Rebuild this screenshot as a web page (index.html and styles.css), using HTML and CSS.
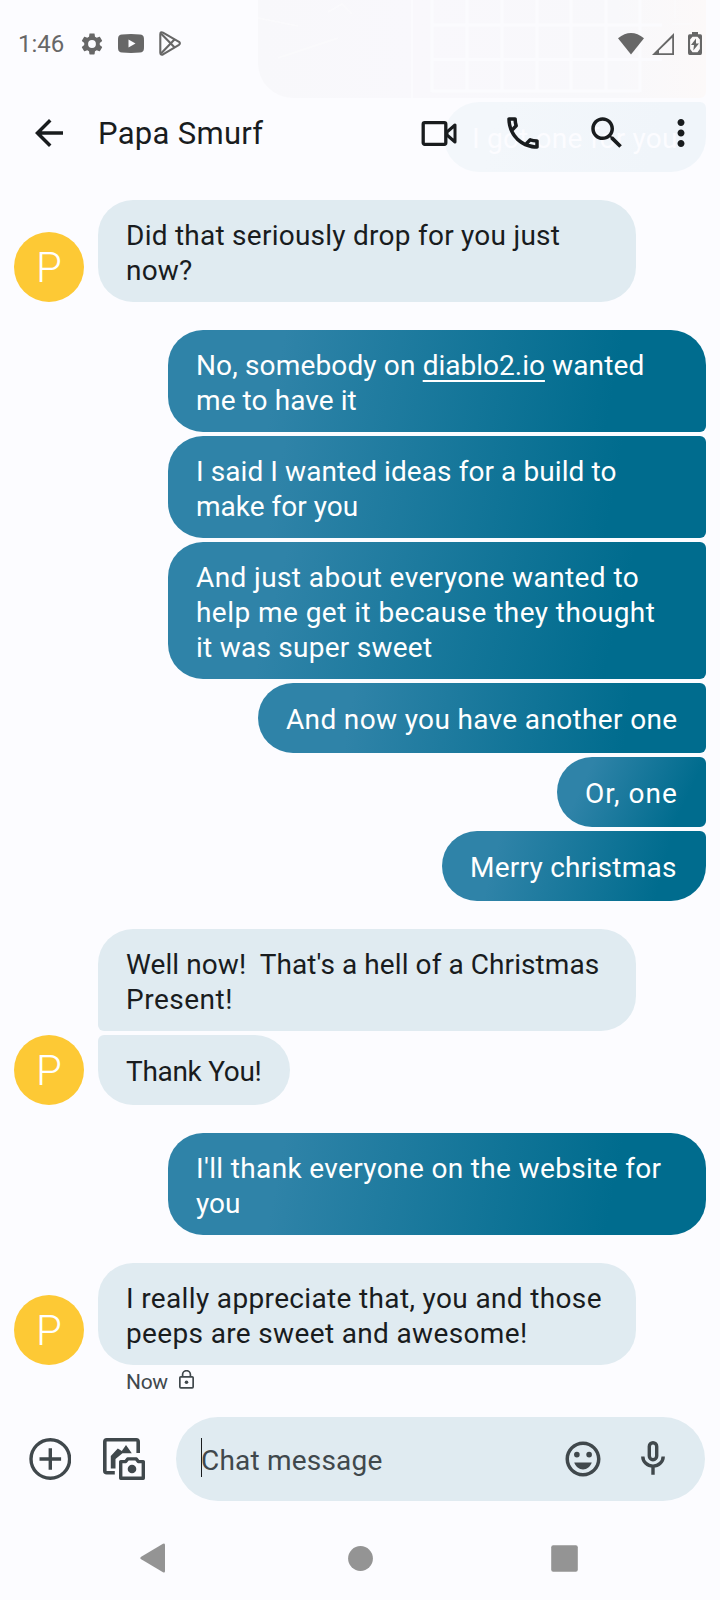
FILE: index.html
```html
<!DOCTYPE html>
<html lang="en">
<head>
<meta charset="utf-8">
<title>Papa Smurf</title>
<link rel="stylesheet" href="styles.css">
</head>
<body>
<div class="screen">
  <div class="scrolled">
    <svg class="scrolled-photo" width="448" height="98" viewBox="0 0 448 98">
      <defs>
        <linearGradient id="photo" x1="0" y1="0" x2="1" y2="0">
          <stop offset="0" stop-color="#f8f8fb"/>
          <stop offset=".35" stop-color="#f9f8fc"/>
          <stop offset=".8" stop-color="#f8f8fb"/>
          <stop offset="1" stop-color="#fcf9f9"/>
        </linearGradient>
      </defs>
      <path fill="url(#photo)" d="M0 0h448v92a6 6 0 0 1-6 6H35A35 35 0 0 1 0 63z"/>
      <g fill="none" stroke="#fbfbfe" stroke-width="3">
        <path d="M154 0v98" stroke-width="2"/>
        <path d="M174 0v92M209 0v92M244 0v92M279 0v92M313 0v92M348 0v92M382 0v92M174 25h230M174 59.500h230M174 91h208"/>
        <path d="M417 0v18M414 24h20M0 18l40 8M20 58l60-20M70 12l14-8 10 10" stroke-width="1.500" opacity=".6"/>
      </g>
    </svg>
    <div class="scrolled-bubble">I got one for you</div>
  </div>

  <header class="status">
    <span class="time">1:46</span>
    <svg class="gear" width="26" height="26" viewBox="0 0 24 24"><path fill="#676767" d="M19.140 12.940c.04-.3.060-.610.060-.940 0-.320-.020-.640-.070-.940l2.030-1.580c.18-.14.23-.410.120-.610l-1.920-3.320c-.12-.22-.370-.290-.590-.220l-2.390.960c-.5-.380-1.030-.7-1.620-.940L14.400 2.810c-.04-.240-.240-.410-.480-.410h-3.840c-.240 0-.430.170-.470.410L9.250 5.350c-.590.240-1.130.570-1.620.940L5.240 5.330c-.22-.080-.470 0-.590.220L2.740 8.870c-.120.210-.080.470.120.610l2.030 1.580c-.050.300-.090.630-.090.940s.020.640.070.940l-2.030 1.580c-.180.140-.230.410-.120.610l1.920 3.320c.12.22.370.290.590.220l2.390-.960c.5.380 1.030.7 1.620.940l.360 2.540c.050.240.240.410.480.410h3.840c.240 0 .440-.170.470-.410l.360-2.540c.590-.240 1.130-.560 1.620-.940l2.390.960c.220.080.470 0 .590-.220l1.920-3.320c.120-.220.070-.470-.120-.610zM12 15.600A3.600 3.600 0 1 1 12 8.400a3.600 3.600 0 0 1 0 7.200z"/></svg>
    <svg class="tube" width="26" height="19" viewBox="0 0 26 19"><path fill="#676767" fill-rule="evenodd" d="M4 .4Q13-.4 22 .4q3.600.2 3.900 3.600.3 5.500 0 11-.3 3.400-3.900 3.600-9 .8-18 0Q.4 18.400.1 15-.2 9.500.1 4 .4.600 4 .4zM10.500 5.500v8l7-4z"/></svg>
    <svg class="play" width="23" height="25" viewBox="0 0 23 25"><g fill="none" stroke="#676767" stroke-width="2.100" stroke-linejoin="round"><path d="M1.300 3.500Q1.300.4 4 1.600l16 9.200q1.800 1.500 0 3L4 23.400Q1.300 24.400 1.300 21.500z"/><path d="M2 2.500 15.700 16.600M2 22.500 15.700 8.200"/></g></svg>
    <svg class="wifi" width="26" height="22" viewBox="0 0 26 22"><path fill="#676767" d="M0 5.200Q13-5.200 26 5.200L13 21.500z"/></svg>
    <svg class="signal" width="22" height="22" viewBox="0 0 22 22"><path fill="#676767" fill-rule="evenodd" d="M22 0v22H0zM20.200 4.800 7 17.500v2.700h13.200z"/></svg>
    <svg class="battery" width="14" height="23" viewBox="0 0 14 23"><path fill="#676767" fill-rule="evenodd" d="M4 0h6v2.200h2.500Q14 2.200 14 4v17q0 2-1.600 2H1.600Q0 23 0 21V4Q0 2.200 1.500 2.200H4zM4.500 4.800 2.100 7.500v9.500l2.400 3.200h5l2.400-3.200V7.500L9.500 4.800z"/><path fill="#676767" d="M8 6.500 3 13h3l-.7 5.500L11 11.600H8z"/></svg>
  </header>

  <header class="bar">
    <svg width="42" height="42" viewBox="0 0 24 24"><path fill="#191c1e" d="M20 11H7.830l5.590-5.590L12 4l-8 8 8 8 1.410-1.410L7.830 13H20v-2z"/></svg>
    <h1 class="name">Papa Smurf</h1>
    <svg class="video" width="42" height="42" viewBox="0 0 42 42"><rect x="5.200" y="10.700" width="22.600" height="21.600" rx="1.500" fill="none" stroke="#191c1e" stroke-width="3.300"/><path fill="none" stroke="#191c1e" stroke-width="3" stroke-linejoin="round" d="M37 13v17l-8-7v-3z"/></svg>
    <svg width="42" height="42" viewBox="0 0 24 24"><path fill="#191c1e" d="M6.540 5c.060.890.210 1.760.450 2.590l-1.200 1.200c-.410-1.200-.670-2.470-.760-3.790h1.510m9.860 12.020c.850.240 1.720.390 2.600.450v1.490c-1.320-.090-2.590-.350-3.800-.750l1.200-1.190M7.500 3H4c-.550 0-1 .450-1 1 0 9.390 7.610 17 17 17 .550 0 1-.450 1-1v-3.490c0-.550-.450-1-1-1-1.240 0-2.450-.2-3.570-.570-.1-.040-.210-.050-.310-.050-.260 0-.510.1-.710.290l-2.200 2.200c-2.830-1.450-5.150-3.760-6.590-6.590l2.200-2.200c.280-.280.360-.670.250-1.020C8.700 6.450 8.500 5.250 8.500 4c0-.550-.450-1-1-1z"/></svg>
    <svg width="42" height="42" viewBox="0 0 24 24"><path fill="#191c1e" d="M15.500 14h-.790l-.280-.270C15.410 12.590 16 11.110 16 9.500 16 5.910 13.090 3 9.500 3S3 5.910 3 9.500 5.910 16 9.500 16c1.610 0 3.090-.590 4.230-1.570l.270.280v.790l5 4.990L20.490 19l-4.990-5zm-6 0C7.010 14 5 11.990 5 9.500S7.010 5 9.500 5 14 7.010 14 9.500 11.990 14 9.500 14z"/></svg>
    <svg class="more" width="42" height="42" viewBox="0 0 24 24"><path fill="#191c1e" d="M12 8c1.100 0 2-.9 2-2s-.9-2-2-2-2 .9-2 2 .9 2 2 2zm0 2c-1.100 0-2 .9-2 2s.9 2 2 2 2-.9 2-2-.9-2-2-2zm0 6c-1.100 0-2 .9-2 2s.9 2 2 2 2-.9 2-2-.9-2-2-2z"/></svg>
  </header>

  <main class="chat">
    <section class="group received">
      <div class="avatar">P</div>
      <div class="stack">
        <div class="bubble wide"><span class="t25">Did that seriously drop for you just</span><br><span class="t2">now?</span></div>
      </div>
    </section>

    <section class="group sent">
      <div class="bubble wide first"><span class="t15">No, somebody on <a class="link">diablo2.io</a> wanted</span><br><span class="t1">me to have it</span></div>
      <div class="bubble wide middle"><span class="t1">I said I wanted ideas for a build to</span><br>make for you</div>
      <div class="bubble wide tall middle"><span class="t4">And just about everyone wanted to</span><br><span class="t45">help me get it because they thought</span><br><span class="t25">it was super sweet</span></div>
      <div class="bubble short another middle"><span class="t35">And now you have another one</span></div>
      <div class="bubble short or-one middle"><span class="t10">Or, one</span></div>
      <div class="bubble short merry last"><span class="t25">Merry christmas</span></div>
    </section>

    <section class="group received">
      <div class="avatar">P</div>
      <div class="stack">
        <div class="bubble wide first"><span class="t1">Well now!&nbsp; That's a hell of a Christmas</span><br><span class="t5">Present!</span></div>
        <div class="bubble short thanks last"><span class="tn3">Thank You!</span></div>
      </div>
    </section>

    <section class="group sent">
      <div class="bubble wide"><span class="t35">I'll thank everyone on the website for</span><br>you</div>
    </section>

    <section class="group received">
      <div class="avatar">P</div>
      <div class="stack">
        <div class="bubble wide"><span class="t35">I really appreciate that, you and those</span><br><span class="t35">peeps are sweet and awesome!</span></div>
      </div>
    </section>
    <div class="meta">
      <span>Now</span>
      <svg width="15" height="19" viewBox="0 0 15 19"><g fill="none" stroke="#40484c" stroke-width="1.700"><rect x=".85" y="6.800" width="13.300" height="11" rx="1"/><path d="M3.600 6.500V4.600a3.900 3.900 0 0 1 7.800 0v1.900"/></g><circle cx="7.500" cy="12.300" r="1.800" fill="#40484c"/></svg>
    </div>
  </main>

  <footer class="compose">
    <svg width="42" height="42" viewBox="0 0 42 42"><g fill="none" stroke="#40484c" stroke-width="3.400"><circle cx="21.300" cy="21" r="19.300"/><path d="M21.300 10.200v21.600M10.500 21h21.600"/></g></svg>
    <svg class="gallery" width="42" height="42" viewBox="0 0 42 42"><path fill="none" stroke="#40484c" stroke-width="3.600" d="M11.800 34.700H3.800Q1.800 34.700 1.800 32.700V3.800Q1.800 1.800 3.800 1.800h29.400q2 0 2 2V15"/><path fill="#40484c" d="M7.800 30.500V18l7-7.500 4 2.500L23 7l5.800 8.300H19.500L12.500 21v9.500z"/><path fill="none" stroke="#40484c" stroke-width="3.400" stroke-linejoin="round" d="M17.700 40.300V23.600h5l2-2.700h8.600l2 2.700h5v16.700z"/><circle cx="29" cy="31" r="4.300" fill="#40484c"/></svg>
    <div class="field">
      <span class="caret"></span><span class="placeholder">Chat message</span>
      <svg class="emoji" width="42" height="42" viewBox="0 0 24 24"><g fill="#40484c"><path d="M11.990 2C6.470 2 2 6.480 2 12s4.470 10 9.990 10C17.520 22 22 17.520 22 12S17.520 2 11.990 2zM12 20c-4.420 0-8-3.580-8-8s3.580-8 8-8 8 3.580 8 8-3.580 8-8 8z"/><circle cx="15.500" cy="9.500" r="1.600"/><circle cx="8.500" cy="9.500" r="1.600"/><path d="M12 18c2.280 0 4.220-1.660 5-4H7c.78 2.340 2.720 4 5 4z"/></g></svg>
      <svg class="mic" width="42" height="42" viewBox="0 0 42 42"><g fill="none" stroke="#40484c" stroke-width="3.400"><rect x="17.300" y="4.700" width="7.400" height="17" rx="3.700"/><path d="M10.800 18.500a10.200 9.700 0 0 0 20.400 0M21 28.500v8.300"/></g></svg>
    </div>
  </footer>

  <nav class="nav">
    <svg width="26" height="30" viewBox="0 0 26 30"><path fill="#949494" d="M23 .8q2-1 2 1.200v26q0 2.200-2 1.200L1.200 16.300q-1.900-1.300 0-2.600z"/></svg>
    <svg class="home" width="25" height="25" viewBox="0 0 25 25"><circle cx="12.500" cy="12.500" r="12.400" fill="#949494"/></svg>
    <svg width="27" height="27" viewBox="0 0 27 27"><rect x=".2" y=".2" width="26.600" height="26.600" rx="2" fill="#949494"/></svg>
  </nav>
</div>
</body>
</html>
```

FILE: styles.css
```css
* { box-sizing: border-box; }

body {
  margin: 0;
  background: #fcfcff;
  font-family: Roboto, "Liberation Sans", sans-serif;
  color: #191c1e;
}

svg { display: block; flex: none; }

.screen {
  position: relative;
  width: 720px;
  height: 1600px;
  overflow: hidden;
  display: flex;
  flex-direction: column;
}

/* Older messages, faded out beneath the translucent toolbar */
.scrolled {
  position: absolute;
  top: 0;
  right: 14px;
  display: flex;
  flex-direction: column;
  align-items: flex-end;
  gap: 4px;
}
.scrolled-bubble {
  width: 262px;
  height: 70px;
  padding: 19px 28px 0;
  border-radius: 35px 6px 35px 35px;
  background: linear-gradient(105deg, #f3f7fb 20%, #f0f5fa 80%);
  color: #fcfcff;
  font-size: 28px;
  line-height: 35px;
  letter-spacing: .2px;
  white-space: nowrap;
}

.status {
  position: relative;
  flex: none;
  display: flex;
  align-items: center;
  height: 87px;
  padding: 0 18px;
  color: #676767;
}
.time { width: 61px; font-size: 24px; line-height: 28px; padding-top: 1px; }
.tube { margin-left: 13px; }
.play { margin-left: 15px; }
.wifi { margin-left: auto; }
.signal { margin-left: 8px; }
.battery { margin-left: 14px; }

.bar {
  position: relative;
  flex: none;
  display: flex;
  align-items: center;
  height: 92px;
  padding: 0 18px 0 28px;
}
.name {
  margin: 0 auto 0 28px;
  padding-top: 2px;
  font-size: 31px;
  font-weight: 400;
  letter-spacing: .3px;
  line-height: 40px;
}
.bar svg + svg { margin-left: 42px; }
.bar .more { margin-left: 32px; }

.chat {
  flex: none;
  height: 1223px;
  padding: 21px 14px 0;
  display: flex;
  flex-direction: column;
  gap: 28px;
}
.group { display: flex; }
.received { align-items: flex-end; gap: 14px; }
.sent { flex-direction: column; align-items: flex-end; gap: 4px; }
.stack { display: flex; flex-direction: column; align-items: flex-start; gap: 4px; }

.avatar {
  width: 70px;
  height: 70px;
  border-radius: 50%;
  background: #fdc935;
  color: #fff;
  font-size: 42px;
  font-weight: 300;
  line-height: 71px;
  text-align: center;
}

.bubble {
  padding: 18px 28px 14px;
  border-radius: 35px;
  font-size: 28px;
  line-height: 35px;
  white-space: nowrap;
}
.wide { width: 538px; height: 102px; }
.tall { height: 137px; }
.short { height: 70px; padding-top: 19px; }
.thanks { width: 192px; }
.another { width: 448px; }
.or-one { width: 149px; }
.merry { width: 264px; }

.received .bubble { background: #e0ebf1; }
.received .first { border-bottom-left-radius: 6px; }
.received .last { border-top-left-radius: 6px; }

.sent .bubble {
  color: #fff;
  background: linear-gradient(100.7deg, #2f83a8 21%, #006c8e 82%);
}
.sent .first { border-bottom-right-radius: 6px; }
.sent .middle { border-top-right-radius: 6px; border-bottom-right-radius: 6px; }
.sent .last { border-top-right-radius: 6px; }
.sent .tall { background: linear-gradient(104.3deg, #2f83a8 21%, #006c8e 82%); }
.sent .another { background: linear-gradient(98.9deg, #2f83a8 21%, #006c8e 82%); }
.sent .or-one { background: linear-gradient(115.2deg, #2f83a8 21%, #006c8e 82%); }
.sent .merry { background: linear-gradient(104.9deg, #2f83a8 21%, #006c8e 82%); }

.link {
  letter-spacing: 0;
  text-decoration: underline;
  text-decoration-thickness: 2px;
  text-underline-offset: 5px;
  text-decoration-skip-ink: none;
}

/* Tracking steps */
.tn3 { letter-spacing: -.3px; }
.t1 { letter-spacing: .08px; }
.t15 { letter-spacing: .15px; }
.t2 { letter-spacing: .18px; }
.t25 { letter-spacing: .25px; }
.t35 { letter-spacing: .35px; }
.t4 { letter-spacing: .4px; }
.t45 { letter-spacing: .45px; }
.t5 { letter-spacing: .5px; }
.t10 { letter-spacing: 1px; }

.meta {
  display: flex;
  align-items: center;
  gap: 11px;
  margin-top: -28px;
  padding: 4px 0 0 112px;
  color: #40484c;
  font-size: 21px;
  line-height: 26px;
  letter-spacing: -.3px;
}
.meta svg { margin-top: -5px; }

.compose {
  flex: none;
  display: flex;
  align-items: center;
  height: 114px;
  padding: 0 15px 0 29px;
}
.gallery { margin: 0 31px 0 32px; }
.field {
  flex: 1;
  display: flex;
  align-items: center;
  height: 84px;
  padding: 0 31px 0 25px;
  border-radius: 42px;
  background: #e0ebf1;
}
.caret { width: 1px; height: 39px; margin-top: -3px; background: #191c1e; }
.placeholder {
  margin: 0 auto 0 -1px;
  padding-top: 2px;
  color: #40484c;
  font-size: 28px;
  line-height: 35px;
  letter-spacing: .2px;
}
.emoji { margin-right: 28px; }

.nav {
  flex: none;
  display: flex;
  align-items: center;
  justify-content: space-between;
  height: 84px;
  padding: 0 142px 0 140px;
}
.home { margin-left: 3px; }
```
